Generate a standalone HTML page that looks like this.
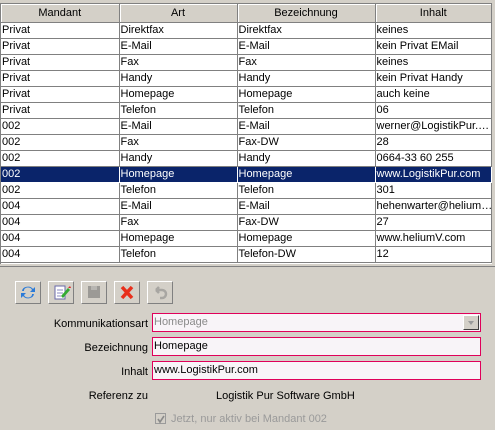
<!DOCTYPE html>
<html><head><style>
body{margin:0;width:495px;height:430px;background:#d4d0c8;font-family:"Liberation Sans",sans-serif;font-size:11px;position:relative;overflow:hidden}
.t{position:absolute;left:0;top:3px;width:491px;height:260px;background:#fff;border-top:1px solid #808080;border-left:1px solid #808080;overflow:hidden}
table{border-collapse:collapse;table-layout:fixed;width:491px;font-size:11px}
th{height:18px;line-height:18px;background:#d4d0c8;font-weight:normal;border-right:1px solid #808080;border-bottom:1px solid #808080;box-shadow:inset 1px 1px #fff;padding:0;text-align:center}
td{height:15px;line-height:15px;padding:0 0 0 1px;border-right:1px solid #808080;border-bottom:1px solid #808080;white-space:nowrap;overflow:hidden}
tr.s td{background:#0a246a;color:#fff;border-color:#fff}
.b{position:absolute;top:281px;width:26px;height:23px;border:1px solid;border-color:#fff #808080 #808080 #fff;box-sizing:border-box}
.l{position:absolute;text-align:right;width:148px;left:0}
.f{position:absolute;left:152px;width:329px;height:19px;border:1px solid #e0005a;background:#f8f4f8;box-sizing:border-box;padding:0 1px;line-height:17px}
</style></head><body>
<div style="position:absolute;left:0;top:266px;width:495px;height:1px;background:#808080"></div>
<div class="t"><table>
<colgroup><col style="width:118px"><col style="width:118px"><col style="width:138px"><col></colgroup>
<tr><th>Mandant</th><th>Art</th><th>Bezeichnung</th><th>Inhalt</th></tr>
<tr><td>Privat</td><td>Direktfax</td><td>Direktfax</td><td>keines</td></tr>
<tr><td>Privat</td><td>E-Mail</td><td>E-Mail</td><td>kein Privat EMail</td></tr>
<tr><td>Privat</td><td>Fax</td><td>Fax</td><td>keines</td></tr>
<tr><td>Privat</td><td>Handy</td><td>Handy</td><td>kein Privat Handy</td></tr>
<tr><td>Privat</td><td>Homepage</td><td>Homepage</td><td>auch keine</td></tr>
<tr><td>Privat</td><td>Telefon</td><td>Telefon</td><td>06</td></tr>
<tr><td>002</td><td>E-Mail</td><td>E-Mail</td><td>werner@LogistikPur.…</td></tr>
<tr><td>002</td><td>Fax</td><td>Fax-DW</td><td>28</td></tr>
<tr><td>002</td><td>Handy</td><td>Handy</td><td>0664-33 60 255</td></tr>
<tr class="s"><td>002</td><td>Homepage</td><td>Homepage</td><td>www.LogistikPur.com</td></tr>
<tr><td>002</td><td>Telefon</td><td>Telefon</td><td>301</td></tr>
<tr><td>004</td><td>E-Mail</td><td>E-Mail</td><td>hehenwarter@helium…</td></tr>
<tr><td>004</td><td>Fax</td><td>Fax-DW</td><td>27</td></tr>
<tr><td>004</td><td>Homepage</td><td>Homepage</td><td>www.heliumV.com</td></tr>
<tr><td>004</td><td>Telefon</td><td>Telefon-DW</td><td>12</td></tr>
</table></div>
<div class="b" style="left:15px"><svg width="24" height="21"><path d="M6 9a6 5 0 0 1 11-2l2-2v5h-5l2-2a4 3 0 0 0-8 1z" fill="#2a7ad8"/><path d="M18 12a6 5 0 0 1-11 2l-2 2v-5h5l-2 2a4 3 0 0 0 8-1z" fill="#2a7ad8"/></svg></div>
<div class="b" style="left:48px"><svg width="24" height="21"><rect x="6" y="4" width="10" height="13" fill="#fff" stroke="#6a6aa8"/><path d="M8 8h6M8 11h6M8 14h4" stroke="#8888c0"/><path d="M12 14l7-8 2 2-7 8z" fill="#3a3"/><path d="M19 6l2-2 1 2z" fill="#d22"/></svg></div>
<div class="b" style="left:81px"><svg width="24" height="21"><rect x="6" y="4" width="12" height="12" fill="#9c9a96"/><rect x="9" y="4" width="6" height="4" fill="#b8b6b2"/></svg></div>
<div class="b" style="left:114px"><svg width="24" height="21"><path d="M7 5l10 11M17 5L7 16" stroke="#e8301c" stroke-width="3.5"/></svg></div>
<div class="b" style="left:147px"><svg width="24" height="21"><path d="M8 8h6a4 4 0 0 1 0 8h-2M8 8l3-3M8 8l3 3" stroke="#a8a6a2" stroke-width="2.5" fill="none"/></svg></div>
<div class="l" style="top:318px">Kommunikationsart</div>
<div class="f" style="top:313px;color:#8a8a8a">Homepage<div style="position:absolute;right:1px;top:1px;width:16px;height:15px;background:#d4d0c8;border:1px solid;border-color:#fff #404040 #404040 #fff;box-sizing:border-box"><div style="position:absolute;left:4px;top:5px;border:3px solid transparent;border-top:4px solid #9a9a9a"></div></div></div>
<div class="l" style="top:342px">Bezeichnung</div>
<div class="f" style="top:337px">Homepage</div>
<div class="l" style="top:366px">Inhalt</div>
<div class="f" style="top:361px">www.LogistikPur.com</div>
<div class="l" style="top:390px">Referenz zu</div>
<div style="position:absolute;left:216px;top:390px">Logistik Pur Software GmbH</div>
<div style="position:absolute;left:155px;top:413px;width:11px;height:11px;border:1px solid #9a9a9a;background:#d4d0c8;box-sizing:border-box"><svg width="11" height="11" style="position:absolute;left:0;top:0"><path d="M2 5l2 3 4-6" stroke="#8a8a8a" stroke-width="1.6" fill="none"/></svg></div>
<div style="position:absolute;left:171px;top:413px;color:#9a9a9a">Jetzt, nur aktiv bei Mandant 002</div>
</body></html>
